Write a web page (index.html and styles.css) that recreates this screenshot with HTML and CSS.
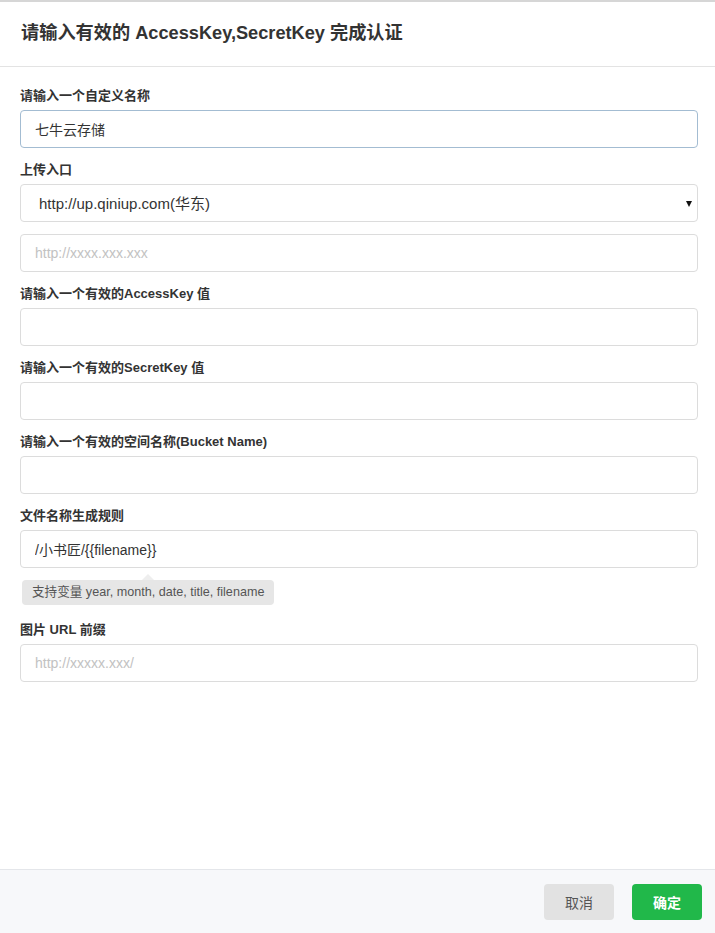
FILE: index.html
```html
<!DOCTYPE html>
<html lang="zh-CN">
<head>
    <meta charset="UTF-8">
    <meta name="viewport" content="width=device-width, initial-scale=1.0">
    <title>七牛云存储 - 认证</title>
    <link rel="stylesheet" href="styles.css">
</head>
<body>
    <div class="modal">
        <header class="modal-header">
            <h1>请输入有效的 AccessKey,SecretKey 完成认证</h1>
        </header>
        <main class="modal-body">
            <div class="field">
                <label>请输入一个自定义名称</label>
                <input class="input focused" type="text" value="七牛云存储">
            </div>
            <div class="field">
                <label>上传入口</label>
                <div class="select-wrap">
                    <select class="input select">
                        <option>http://up.qiniup.com(华东)</option>
                    </select>
                </div>
                <input class="input extra" type="text" placeholder="http://xxxx.xxx.xxx">
            </div>
            <div class="field">
                <label>请输入一个有效的AccessKey 值</label>
                <input class="input" type="text">
            </div>
            <div class="field">
                <label>请输入一个有效的SecretKey 值</label>
                <input class="input" type="text">
            </div>
            <div class="field">
                <label>请输入一个有效的空间名称(Bucket Name)</label>
                <input class="input" type="text">
            </div>
            <div class="field">
                <label>文件名称生成规则</label>
                <input class="input" type="text" value="/小书匠/{{filename}}">
                <div class="tip">支持变量 year, month, date, title, filename</div>
            </div>
            <div class="field">
                <label>图片 URL 前缀</label>
                <input class="input" type="text" placeholder="http://xxxxx.xxx/">
            </div>
        </main>
        <footer class="modal-footer">
            <button class="btn btn-cancel">取消</button>
            <button class="btn btn-ok">确定</button>
        </footer>
    </div>
</body>
</html>
```

FILE: styles.css
```css
body, html {
    margin: 0;
    padding: 0;
    height: 100%;
    font-family: "Liberation Sans", Arial, "Noto Sans CJK SC", sans-serif;
    color: #333;
    background: #fff;
}

.modal {
    height: 100vh;
    display: flex;
    flex-direction: column;
    border-top: 2px solid #d6d6d6;
    box-sizing: border-box;
}

.modal-header {
    height: 64px;
    border-bottom: 1px solid #e3e3e3;
    display: flex;
    align-items: center;
    padding: 0 21px;
}

.modal-header h1 {
    margin: 0;
    font-size: 18.2px;
    font-weight: bold;
    color: #333;
    position: relative;
    top: -3px;
}

.modal-body {
    flex: 1;
    padding: 20px 17px 0 20px;
}

.field {
    margin-bottom: 13px;
}

.field label {
    display: block;
    font-size: 13px;
    font-weight: bold;
    line-height: 18px;
    margin-bottom: 5px;
    color: #333;
}

.input {
    display: block;
    width: 100%;
    height: 38px;
    box-sizing: border-box;
    border: 1px solid #dcdcdc;
    border-radius: 4px;
    padding: 0 14px;
    font-family: "Liberation Sans", Arial, "Noto Sans CJK SC", sans-serif;
    font-size: 14px;
    color: #333;
    background: #fff;
    outline: none;
}

.input::placeholder {
    color: #c2c2c2;
}

.input.focused {
    border-color: #a3bcd2;
}

.input.extra {
    margin-top: 12px;
}

.select-wrap {
    position: relative;
}

.select {
    appearance: none;
    -webkit-appearance: none;
    padding-left: 18px;
    color: #333;
    font-size: 15px;
}

.select-wrap::after {
    content: "";
    position: absolute;
    right: 6px;
    top: 17px;
    border-left: 3.5px solid transparent;
    border-right: 3.5px solid transparent;
    border-top: 6px solid #111;
}

.tip {
    position: relative;
    display: inline-block;
    margin: 12px 0 3px 2px;
    padding: 0 10px;
    height: 25px;
    line-height: 25px;
    font-size: 12.6px;
    color: #555;
    background: #e6e6e6;
    border-radius: 4px;
}

.tip::before {
    content: "";
    position: absolute;
    top: -6px;
    left: 120px;
    border-left: 6px solid transparent;
    border-right: 6px solid transparent;
    border-bottom: 6px solid #eeeeee;
}

.modal-footer {
    height: 63px;
    border-top: 1px solid #e4e6ea;
    background: #f7f8fa;
    display: flex;
    align-items: center;
    justify-content: flex-end;
    gap: 18px;
    padding: 0 13px;
}

.btn {
    width: 70px;
    height: 36px;
    border: none;
    border-radius: 4px;
    font-family: "Liberation Sans", Arial, "Noto Sans CJK SC", sans-serif;
    font-size: 14px;
    cursor: pointer;
}

.btn-cancel {
    background: #e2e2e2;
    color: #555;
}

.btn-ok {
    background: #21b84a;
    color: #fff;
    font-weight: bold;
}
```
